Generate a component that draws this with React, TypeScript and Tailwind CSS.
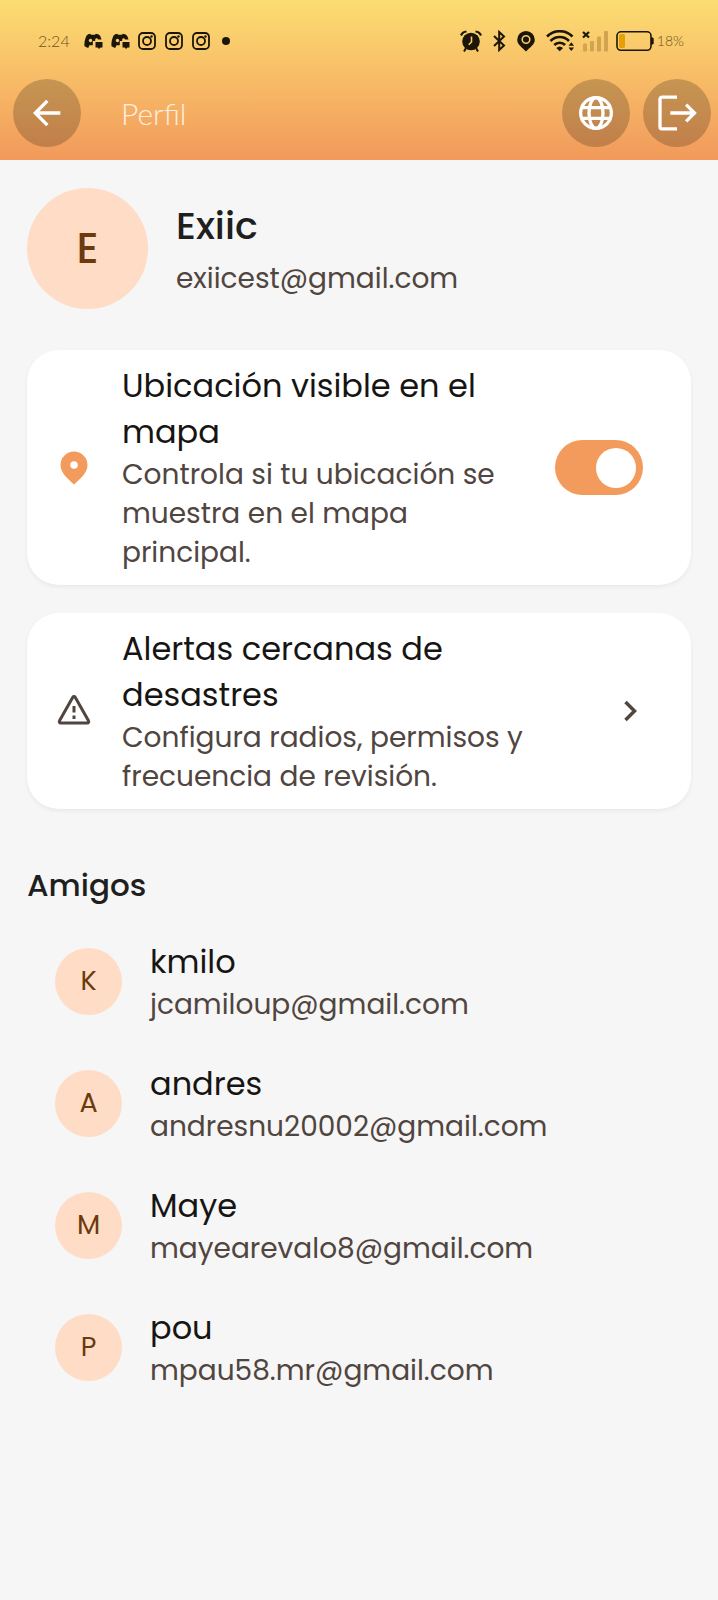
import { useState } from 'react'
import type { ReactNode } from 'react'

interface Friend {
  name: string
  email: string
}

const friends: Friend[] = [
  { name: 'kmilo', email: 'jcamiloup@gmail.com' },
  { name: 'andres', email: 'andresnu20002@gmail.com' },
  { name: 'Maye', email: 'mayearevalo8@gmail.com' },
  { name: 'pou', email: 'mpau58.mr@gmail.com' },
]

function DiscordIcon() {
  return (
    <svg width="19" height="18" viewBox="0 0 19 18" fill="#1c1608">
      <path d="M6.200 1.800 7 2.800h4l.8-1c1.700.2 3 .8 4 1.600 1 1.500 1.500 2.800 1.700 4.200h-3.500a1.500 2 0 0 0-2.800 0V9H8.800v4.200H5.500L4.200 16C2.400 15.500 1.200 14.800.4 14 .2 10 1 6.500 2.600 3.400c1-.8 2.200-1.400 3.600-1.600z" />
      <circle cx="6.500" cy="8.500" r="1.700" fill="#f7cb6c" />
      <path d="M11.500 10h7v5.500h-2L15 17l-1.200-1.500h-2.300z" />
    </svg>
  )
}

function InstagramIcon() {
  return (
    <svg width="18" height="18" viewBox="0 0 18 18" fill="none" stroke="#1c1608" strokeWidth="1.800">
      <rect x="1" y="1" width="16" height="16" rx="4" />
      <circle cx="9" cy="9" r="4" />
      <circle cx="13.500" cy="4.500" r="1.200" fill="#1c1608" stroke="none" />
    </svg>
  )
}

function AlarmIcon() {
  return (
    <svg width="22" height="22" viewBox="0 0 22 22" fill="#1c1608">
      <circle cx="11" cy="11.500" r="8.800" />
      <path d="M1 5.500Q2.500 1.800 6.500 1.500M21 5.500Q19.500 1.800 15.500 1.500" fill="none" stroke="#1c1608" strokeWidth="2.200" />
      <path d="M4 21.500l2-3.500M18 21.500l-2-3.500" stroke="#1c1608" strokeWidth="2" />
      <path d="M11.500 6.500v5.500l-2.800 2.800" fill="none" stroke="#f7c96b" strokeWidth="1.600" />
    </svg>
  )
}

function BluetoothIcon() {
  return (
    <svg width="13" height="22" viewBox="0 0 13 22" fill="none" stroke="#1c1608" strokeWidth="2">
      <path d="M1 6l10 9.500-4.800 4.500V2L11 6.500 1 16" />
    </svg>
  )
}

function StatusPinIcon() {
  return (
    <svg width="18" height="22" viewBox="0 0 18 22">
      <path d="M9 1a8.800 8.800 0 0 0-8.800 8.800C.2 14.500 5 17.500 9 21.500c4-4 8.800-7 8.800-11.700A8.800 8.800 0 0 0 9 1z" fill="#1c1608" />
      <circle cx="9" cy="9.500" r="3.800" fill="none" stroke="#f7c96b" strokeWidth="1.600" />
    </svg>
  )
}

function WifiIcon() {
  return (
    <svg width="29" height="22" viewBox="0 0 29 22" fill="none" stroke="#1c1608" strokeWidth="2.600">
      <path d="M1 6.500a18 18 0 0 1 25.500 0" />
      <path d="M4.500 11a12.800 12.800 0 0 1 18.500 0" />
      <path d="M8.300 15a7.500 7.500 0 0 1 10.800 0" />
      <path d="M10.300 18a5 5 0 0 1 6.800 0L13.700 21.300zM22.500 15.800l2.800-3.500 2.800 3.500zM22.500 17.600h5.600L25.300 21z" fill="#1c1608" stroke="none" />
    </svg>
  )
}

function SignalIcon() {
  return (
    <svg width="27" height="22" viewBox="0 0 27 22">
      <g fill="#d2a350">
        <rect x="1" y="13.500" width="4" height="8" rx="1" />
        <rect x="8" y="11" width="4" height="10.500" rx="1" />
        <rect x="15" y="6.500" width="4" height="15" rx="1" />
        <rect x="22" y="1" width="4" height="20.500" rx="1" />
      </g>
      <path d="M1 2l6 5.500M7 2 1 7.500" stroke="#1c1608" strokeWidth="2.200" />
    </svg>
  )
}

function BatteryIcon() {
  return (
    <svg width="38" height="22" viewBox="0 0 38 22">
      <rect x="1" y="1.800" width="34" height="18.500" rx="4" fill="none" stroke="#1c1608" strokeWidth="1.600" />
      <rect x="3" y="4" width="6" height="14" rx="1.500" fill="#e79f06" />
      <path d="M35 7.500h1.200c.8 0 1.500.6 1.500 1.300v4.400c0 .8-.7 1.300-1.500 1.300H35z" fill="#1c1608" />
    </svg>
  )
}

function StatusBar() {
  return (
    <div className="flex h-[82px] items-center justify-between pl-[38px] pr-[34px] text-[#6d5520]">
      <div className="flex items-center gap-2">
        <span className="mr-[6px] font-[Lato] text-base font-light">2:24</span>
        <DiscordIcon />
        <DiscordIcon />
        <div className="flex gap-[9px]">
          <InstagramIcon />
          <InstagramIcon />
          <InstagramIcon />
        </div>
        <span className="ml-1 size-2 rounded-full bg-[#1c1608]" />
      </div>
      <div className="flex items-center gap-[11px]">
        <AlarmIcon />
        <BluetoothIcon />
        <StatusPinIcon />
        <div className="flex items-center gap-[7px]">
          <WifiIcon />
          <SignalIcon />
          <BatteryIcon />
          <span className="-ml-1 font-[Lato] text-sm font-light">18%</span>
        </div>
      </div>
    </div>
  )
}

function RoundButton({ label, children }: { label: string; children: ReactNode }) {
  return (
    <button
      type="button"
      aria-label={label}
      className="flex size-[68px] shrink-0 items-center justify-center rounded-full bg-black/20"
    >
      <svg width="40" height="40" viewBox="0 0 24 24" fill="none" stroke="white" strokeWidth="2">
        {children}
      </svg>
    </button>
  )
}

function Header() {
  return (
    <header className="bg-linear-to-b from-[#fbdd72] to-[#f1995b] pb-[13px]">
      <StatusBar />
      <div className="-mt-[3px] flex items-center pl-[13px] pr-[7px]">
        <RoundButton label="Volver">
          <path d="M20 12H5M12.200 4.700 5 12l7.200 7.300" />
        </RoundButton>
        <h1 className="ml-10 flex-1 font-[Lato] text-[30px] leading-10 font-light text-white/80">Perfil</h1>
        <div className="flex gap-[13px]">
          <RoundButton label="Idioma">
            <circle cx="12" cy="12" r="9.200" />
            <ellipse cx="12" cy="12" rx="4.200" ry="9.200" />
            <path d="M3.300 8.800h17.400M3.300 15.200h17.400" />
          </RoundButton>
          <RoundButton label="Cerrar sesión">
            <path d="M12 2.500H3.100a1.300 1.300 0 0 0-1.300 1.300v16.400a1.300 1.300 0 0 0 1.300 1.300H12M8 12h14.500M17.500 7l5 5-5 5" />
          </RoundButton>
        </div>
      </div>
    </header>
  )
}

const cardClass =
  'flex w-full items-center gap-7 rounded-[32px] bg-white py-[13px] pl-[27px] pr-10 text-left shadow-[0_2px_4px_rgba(0,0,0,0.06)]'

function LocationCard() {
  const [visible, setVisible] = useState(true)

  return (
    <div className={cardClass}>
      <svg className="shrink-0" width="40" height="40" viewBox="0 0 40 40">
        <path d="M20 3.500A13.500 13.500 0 0 0 6.500 17c0 8 7 13.500 13.500 19.500C26.500 30.500 33.500 25 33.500 17A13.500 13.500 0 0 0 20 3.500z" fill="#f29b5c" />
        <circle cx="20" cy="17" r="3.800" fill="white" />
      </svg>
      <div className="flex-1">
        <label htmlFor="location-visible" className="block text-[32px] leading-[46px] text-[#171513]">
          Ubicación visible en el mapa
        </label>
        <p id="location-hint" className="text-[28px] leading-[39px] text-[#50453f]">
          Controla si tu ubicación se muestra en el mapa principal.
        </p>
      </div>
      <input
        id="location-visible"
        type="checkbox"
        role="switch"
        aria-describedby="location-hint"
        checked={visible}
        onChange={(e) => setVisible(e.target.checked)}
        className="mr-2 flex h-[55px] w-[88px] shrink-0 appearance-none items-center rounded-full bg-gray-300 px-[7px] before:size-10 before:rounded-full before:bg-white before:content-[''] checked:justify-end checked:bg-[#f29b5c]"
      />
    </div>
  )
}

function AlertsCard() {
  return (
    <button type="button" className={cardClass}>
      <svg className="shrink-0" width="40" height="40" viewBox="0 0 40 40" fill="none" stroke="#50453f" strokeWidth="3" strokeLinejoin="round">
        <path d="M18.800 6.300a1.400 1.400 0 0 1 2.400 0l13.300 23.500a1.400 1.400 0 0 1-1.200 2.200H6.700a1.400 1.400 0 0 1-1.200-2.200z" />
        <path d="M20 15v6.500M20 24.500v3.500" />
      </svg>
      <span className="flex-1">
        <span className="block text-[32px] leading-[46px] text-[#171513]">Alertas cercanas de desastres</span>
        <span className="block text-[28px] leading-[39px] text-[#50453f]">
          Configura radios, permisos y frecuencia de revisión.
        </span>
      </span>
      <svg className="shrink-0" width="40" height="40" viewBox="0 0 40 40" fill="none" stroke="#50453f" strokeWidth="3.500">
        <path d="M14.500 11l9 9-9 9" />
      </svg>
    </button>
  )
}

function FriendRow({ name, email }: Friend) {
  return (
    <li className="flex min-h-[122px] items-center gap-7">
      <span className="flex size-[67px] shrink-0 items-center justify-center rounded-full bg-[#ffdcc6] text-[27px] text-[#6b3a0d]">
        {name[0].toUpperCase()}
      </span>
      <div>
        <p className="text-[32px] leading-[46px] text-[#171513]">{name}</p>
        <p className="text-[28px] leading-[39px] text-[#50453f]">{email}</p>
      </div>
    </li>
  )
}

export default function App() {
  return (
    <div className="min-h-screen bg-[#f6f6f6] font-[Poppins,Inter,sans-serif]">
      <Header />
      <main className="px-[27px] pt-7">
        <section className="flex items-center gap-7">
          <span className="flex size-[121px] shrink-0 items-center justify-center rounded-full bg-[#ffdcc6] text-[42px] font-medium text-[#6b3a0d]">
            E
          </span>
          <div>
            <h2 className="text-[38px] leading-[60px] font-medium text-[#201f20]">Exiic</h2>
            <p className="text-[28px] leading-[46px] text-[#50453f]">exiicest@gmail.com</p>
          </div>
        </section>
        <div className="mt-[41px] flex flex-col gap-7">
          <LocationCard />
          <AlertsCard />
        </div>
        <h3 className="mt-[53px] text-[31px] leading-[46px] font-medium text-[#201f20]">Amigos</h3>
        <ul className="mt-[12px] px-7">
          {friends.map((friend) => (
            <FriendRow key={friend.email} {...friend} />
          ))}
        </ul>
      </main>
    </div>
  )
}
